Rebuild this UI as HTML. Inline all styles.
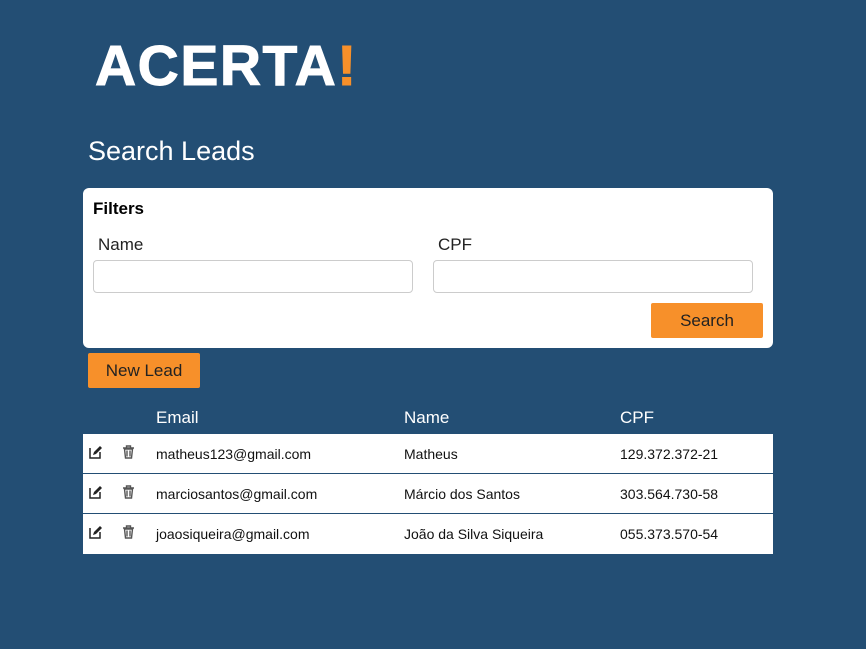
<!DOCTYPE html>
<html><head><meta charset="utf-8"><style>
*{box-sizing:border-box;margin:0;padding:0}
body{width:866px;height:649px;background:#234e74;font-family:"Liberation Sans",Arial,sans-serif;position:relative;overflow:hidden}
.logo{position:absolute;left:95px;top:29px;font-size:57px;font-weight:bold;color:#fff;letter-spacing:1.5px;line-height:74px;-webkit-text-stroke:1px #fff;white-space:nowrap}
.logo span{color:#f7902a;-webkit-text-stroke:1px #f7902a}
h1{position:absolute;left:88px;top:136px;font-size:27px;font-weight:normal;color:#fff}
.card{position:absolute;left:83px;top:188px;width:690px;height:160px;background:#fff;border-radius:6px}
.card b{position:absolute;left:10px;top:11px;font-size:17px}
.lbl{position:absolute;top:47px;font-size:17px;color:#222}
.inp{position:absolute;top:72px;width:320px;height:33px;border:1px solid #ccc;border-radius:4px}
.btn{position:absolute;background:#f7902a;color:#222;font-size:17px;text-align:center;border-radius:2px}
.th{position:absolute;top:408px;color:#fff;font-size:17px}
.row{position:absolute;left:83px;width:690px;height:40px;background:#fff;font-size:14px;color:#111}
.row div{position:absolute;top:12px}
.row svg{position:absolute;top:11px}
</style></head><body>
<div class="logo">ACERTA<span>!</span></div>
<h1>Search Leads</h1>
<div class="card">
<b>Filters</b>
<div class="lbl" style="left:15px">Name</div>
<div class="lbl" style="left:355px">CPF</div>
<div class="inp" style="left:10px"></div>
<div class="inp" style="left:350px"></div>
<div class="btn" style="left:568px;top:115px;width:112px;height:35px;line-height:35px">Search</div>
</div>
<div class="btn" style="left:88px;top:353px;width:112px;height:35px;line-height:35px">New Lead</div>
<div class="th" style="left:156px">Email</div>
<div class="th" style="left:404px">Name</div>
<div class="th" style="left:620px">CPF</div>

<div class="row" style="top:434px;border-bottom:1px solid #234e74">
<svg style="left:6px" width="14" height="14" viewBox="0 0 14 14"><path d="M1 3v10h10V7" fill="none" stroke="#222" stroke-width="1.5"/><path d="M4 10l1-3 6-6 2 2-6 6z" fill="#222"/></svg>
<svg style="left:39px" width="13" height="14" viewBox="0 0 13 14"><path d="M1 3h11M4.5 3V1h4v2M2.5 4l1 9h6l1-9z M5 5.5v6M8 5.5v6" fill="none" stroke="#555" stroke-width="1.4"/></svg>
<div style="left:73px">matheus123@gmail.com</div><div style="left:321px">Matheus</div><div style="left:537px">129.372.372-21</div></div>
<div class="row" style="top:474px;border-bottom:1px solid #234e74">
<svg style="left:6px" width="14" height="14" viewBox="0 0 14 14"><path d="M1 3v10h10V7" fill="none" stroke="#222" stroke-width="1.5"/><path d="M4 10l1-3 6-6 2 2-6 6z" fill="#222"/></svg>
<svg style="left:39px" width="13" height="14" viewBox="0 0 13 14"><path d="M1 3h11M4.5 3V1h4v2M2.5 4l1 9h6l1-9z M5 5.5v6M8 5.5v6" fill="none" stroke="#555" stroke-width="1.4"/></svg>
<div style="left:73px">marciosantos@gmail.com</div><div style="left:321px">Márcio dos Santos</div><div style="left:537px">303.564.730-58</div></div>
<div class="row" style="top:514px">
<svg style="left:6px" width="14" height="14" viewBox="0 0 14 14"><path d="M1 3v10h10V7" fill="none" stroke="#222" stroke-width="1.5"/><path d="M4 10l1-3 6-6 2 2-6 6z" fill="#222"/></svg>
<svg style="left:39px" width="13" height="14" viewBox="0 0 13 14"><path d="M1 3h11M4.5 3V1h4v2M2.5 4l1 9h6l1-9z M5 5.5v6M8 5.5v6" fill="none" stroke="#555" stroke-width="1.4"/></svg>
<div style="left:73px">joaosiqueira@gmail.com</div><div style="left:321px">João da Silva Siqueira</div><div style="left:537px">055.373.570-54</div></div>
</body></html>
